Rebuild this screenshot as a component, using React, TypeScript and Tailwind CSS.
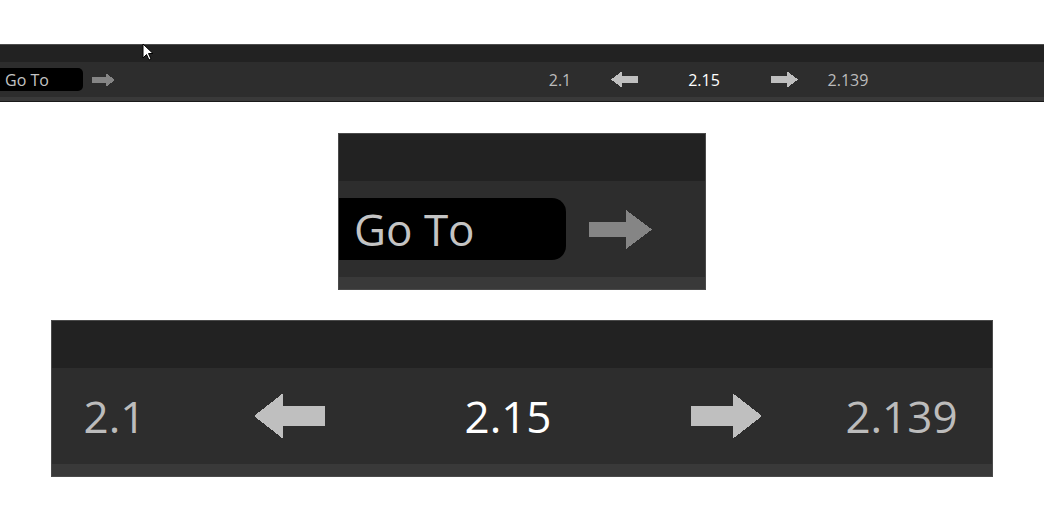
import React from 'react'

type ArrowProps = { dir: 'left' | 'right'; className: string; fill: string; goto?: boolean }

// block arrow; the "Go To" one has a longer, thinner shaft
function Arrow({ dir, className, fill, goto }: ArrowProps) {
  const pts = goto
    ? '0,12 37,12 37,0 63,19.5 37,39 37,27 0,27'
    : '0,13 41,13 41,0 70,23 41,46 41,33 0,33'
  const vb = goto ? '0 0 63 39' : '0 0 70 46'
  return (
    <svg viewBox={vb} preserveAspectRatio="none" className={className} shapeRendering="crispEdges">
      <polygon points={pts} fill={fill} transform={dir === 'left' ? (goto ? 'translate(63 0) scale(-1 1)' : 'translate(70 0) scale(-1 1)') : undefined} />
    </svg>
  )
}

function Cursor() {
  return (
    <svg viewBox="0 0 12 19" className="absolute left-[142px] top-[43px] w-[12px] h-[19px]">
      <path d="M1 1 L1 15 L4.5 11.5 L7 17 L9 16 L6.5 10.5 L11 10.5 Z" fill="#fff" stroke="#000" strokeWidth="1" strokeLinejoin="round" />
    </svg>
  )
}

export default function App() {
  return (
    <div className="relative w-[1044px] h-[522px] overflow-hidden bg-white font-['Open_Sans','Noto_Sans',sans-serif]">
      <div className="flex flex-col items-center pt-[44px]">
        {/* actual toolbar */}
        <div className="w-full h-[58px] flex flex-col border-t border-[#4d4d4d] border-b border-b-[#1a1a1a]">
          <div className="h-[17px] bg-[#222222]" />
          <div className="h-[35px] bg-[#2d2d2d] flex items-center">
            <div className="w-[83px] h-[23px] bg-black rounded-r-[5px] pl-[5px] flex items-center text-[16px] leading-none text-[#c4c4c4]">
              Go To
            </div>
            <Arrow dir="right" goto fill="#858585" className="ml-[9px] w-[23px] h-[14px]" />
            <div className="ml-[413px] grid grid-cols-[64px_64px_96px_64px_64px] items-center justify-items-center text-[16px] leading-none text-[#bcbcbc]">
              <span>2.1</span>
              <Arrow dir="left" fill="#bfbfbf" className="w-[27px] h-[17px]" />
              <span className="text-white">2.15</span>
              <Arrow dir="right" fill="#bfbfbf" className="w-[27px] h-[17px]" />
              <span>2.139</span>
            </div>
          </div>
          <div className="h-[4px] bg-[#393939]" />
        </div>

        {/* zoomed crop: Go To */}
        <div className="mt-[31px] w-[368px] h-[157px] flex flex-col border border-[#4a4a4a]">
          <div className="h-[47px] bg-[#222222]" />
          <div className="h-[96px] bg-[#2d2d2d] flex items-center">
            <div className="w-[227px] h-[62px] bg-black rounded-r-[14px] pl-[15px] flex items-center text-[44px] leading-none text-[#c4c4c4]">
              Go To
            </div>
            <Arrow dir="right" goto fill="#858585" className="ml-[23px] w-[63px] h-[39px]" />
          </div>
          <div className="flex-1 bg-[#393939]" />
        </div>

        {/* zoomed crop: page numbers */}
        <div className="mt-[30px] w-[942px] h-[157px] flex flex-col border border-[#4a4a4a] overflow-hidden">
          <div className="h-[47px] bg-[#222222]" />
          <div className="h-[96px] bg-[#2d2d2d] flex items-center">
            <div className="-ml-[25px] shrink-0 grid grid-cols-[175px_175px_262px_175px_175px] items-center justify-items-center text-[44px] font-medium leading-none text-[#bcbcbc]">
              <span>2.1</span>
              <Arrow dir="left" fill="#bfbfbf" className="w-[71px] h-[46px]" />
              <span className="text-white">2.15</span>
              <Arrow dir="right" fill="#bfbfbf" className="w-[71px] h-[46px]" />
              <span>2.139</span>
            </div>
          </div>
          <div className="flex-1 bg-[#393939]" />
        </div>
      </div>
      <Cursor />
    </div>
  )
}
